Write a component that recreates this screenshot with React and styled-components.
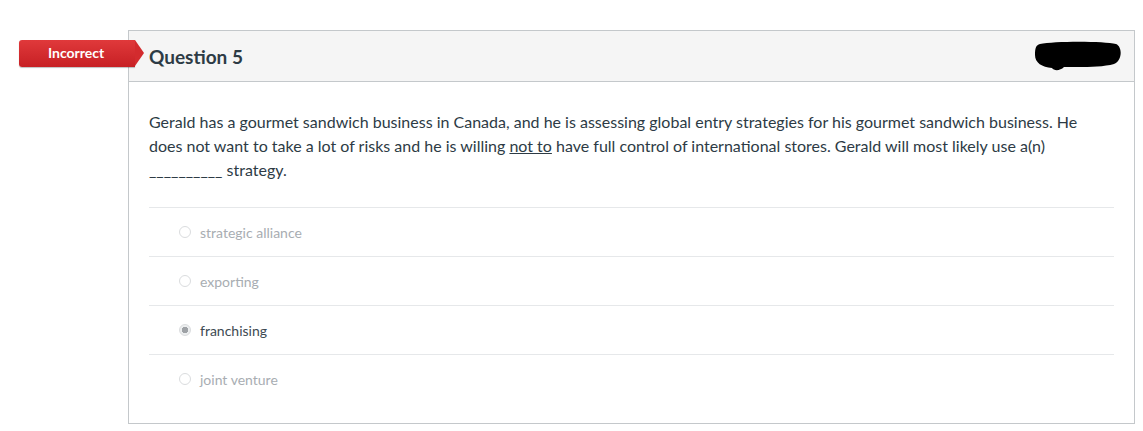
import React from "react";
import styled, { createGlobalStyle } from "styled-components";

const GlobalStyle = createGlobalStyle`
  body {
    margin: 0;
    background: #ffffff;
    font-family: Lato, "Open Sans", sans-serif;
  }
`;

const Page = styled("div")`
  padding: 30px 8px 0 128px;
`;

const Card = styled("div")`
  position: relative;
  width: 1007px;
  box-sizing: border-box;
  border: 1px solid #c4c8cb;
  background: #ffffff;
`;

const Badge = styled("div")`
  position: absolute;
  left: -110px;
  top: 9px;
  height: 27px;
  width: 116px;
  background: linear-gradient(#e0393b, #c72024);
  border-radius: 3px 0 0 3px;
  color: #fff;
  font-size: 14px;
  font-weight: 700;
  line-height: 26px;
  padding-left: 29px;
  box-sizing: border-box;
  box-shadow: 0 1px 1px rgba(0, 0, 0, 0.25);
  &:after {
    content: "";
    position: absolute;
    right: -9px;
    top: 0;
    border-top: 13.5px solid transparent;
    border-bottom: 13.5px solid transparent;
    border-left: 9px solid #d32b2e;
  }
`;

const Header = styled("div")`
  display: flex;
  align-items: center;
  justify-content: space-between;
  height: 50px;
  padding: 0 12px 0 20px;
  background: #f5f5f5;
  border-bottom: 1px solid #c4c8cb;
`;

const Title = styled("h2")`
  margin: 0;
  font-size: 19px;
  font-weight: 700;
  color: #2d3b45;
`;

const Body = styled("div")`
  padding: 28px 20px 20px 20px;
`;

const Question = styled("div")`
  font-size: 16px;
  line-height: 24px;
  color: #2d3b45;
  margin-bottom: 25px;
  u {
    text-decoration: underline;
  }
`;

const Answer = styled("div")`
  display: flex;
  align-items: center;
  height: 48px;
  border-top: 1px solid #e6e8ea;
  padding-left: 30px;
  font-size: 14px;
  color: ${(p) => (p.selected ? "#3d4a52" : "#a8adb2")};
`;

const Radio = styled("span")`
  width: 12px;
  height: 12px;
  border-radius: 50%;
  border: 1px solid #dadcde;
  margin-right: 9px;
  box-sizing: border-box;
  background: ${(p) =>
    p.selected ? "radial-gradient(circle, #9ea2a6 0 3px, #eceeef 3.5px)" : "#fff"};
`;

const answers = [
  { text: "strategic alliance" },
  { text: "exporting" },
  { text: "franchising", selected: true },
  { text: "joint venture" },
];

export default function App() {
  return (
    <Page>
      <GlobalStyle />
      <Card>
        <Badge>Incorrect</Badge>
        <Header>
          <Title>Question 5</Title>
          <svg width="88" height="30" viewBox="0 0 88 30">
            <path
              d="M6 3 C20 0 70 0 82 3 C89 6 88 20 80 23 C66 27 40 26 30 26 C26 30 20 30 18 27 C8 26 1 22 1 14 C1 7 2 4 6 3 Z"
              fill="#000"
            />
          </svg>
        </Header>
        <Body>
          <Question>
            Gerald has a gourmet sandwich business in Canada, and he is assessing global entry
            strategies for his gourmet sandwich business. He does not want to take a lot of risks
            and he is willing <u>not to</u> have full control of international stores. Gerald will
            most likely use a(n) __________ strategy.
          </Question>
          {answers.map((a) => (
            <Answer key={a.text} selected={a.selected}>
              <Radio selected={a.selected} />
              {a.text}
            </Answer>
          ))}
        </Body>
      </Card>
    </Page>
  );
}
